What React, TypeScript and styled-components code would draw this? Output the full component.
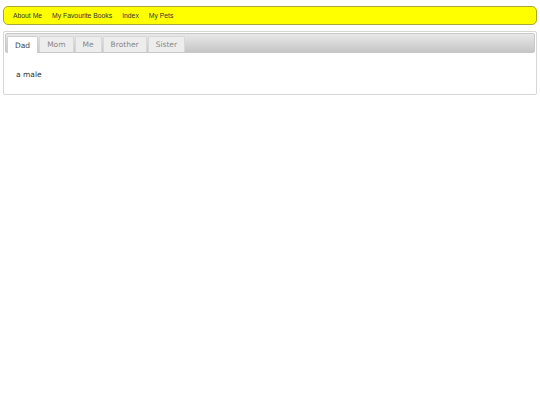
import React, { useState } from 'react';
import styled, { createGlobalStyle } from 'styled-components';

const GlobalStyle = createGlobalStyle`
	html, body {
		margin: 0;
		padding: 0;
		background: #fff;
	}
	body {
		padding: 6px 3px;
	}
`;

const Nav = styled.nav`
	display: flex;
	align-items: center;
	height: 17px;
	padding: 0 9px;
	background: #ffff00;
	border: 1px solid #a8a838;
	border-radius: 5px;
	gap: 10px;
`;

const NavLink = styled.a`
	font-family: "Liberation Sans", Arial, sans-serif;
	font-size: 6.8px;
	color: #333;
	text-decoration: none;
`;

const Panel = styled.div`
	margin-top: 6px;
	border: 1px solid #d6d6d6;
	border-radius: 2px;
	padding: 1px;
	height: 60px;
	box-sizing: content-box;
`;

const TabBar = styled.ul`
	display: flex;
	margin: 0;
	padding: 2px 1px 0;
	list-style: none;
	height: 16px;
	border: 1px solid #c8c8c8;
	border-radius: 2px;
	background: linear-gradient(#e8e8e8, #c6c6c6);
	gap: 1px;
`;

const Tab = styled.li<{ $active?: boolean }>`
	display: flex;
	align-items: center;
	padding: 0 7px;
	height: ${p => (p.$active ? '17px' : '16px')};
	box-sizing: border-box;
	border: 1px solid ${p => (p.$active ? '#d0d0d0' : '#d8d8d8')};
	border-bottom: none;
	border-radius: 2px 2px 0 0;
	background: ${p => (p.$active ? '#fff' : '#ededed')};
	font-family: "DejaVu Sans", Verdana, sans-serif;
	font-size: 7.5px;
	color: ${p => (p.$active ? '#444' : '#888')};
	cursor: pointer;
`;

const Content = styled.div`
	padding: 17px 11px 13px;
	font-family: "DejaVu Sans", Verdana, sans-serif;
	font-size: 7.5px;
	color: #333;
`;

const tabs = [
	{ label: 'Dad', text: 'a male' },
	{ label: 'Mom', text: 'a female' },
	{ label: 'Me', text: 'me' },
	{ label: 'Brother', text: 'a male' },
	{ label: 'Sister', text: 'a female' },
];

export default function App() {
	const [active, setActive] = useState(0);
	return (
		<>
			<GlobalStyle />
			<Nav>
				<NavLink href="#">About Me</NavLink>
				<NavLink href="#">My Favourite Books</NavLink>
				<NavLink href="#">Index</NavLink>
				<NavLink href="#">My Pets</NavLink>
			</Nav>
			<Panel>
				<TabBar>
					{tabs.map((t, i) => (
						<Tab key={t.label} $active={i === active} onClick={() => setActive(i)}>
							{t.label}
						</Tab>
					))}
				</TabBar>
				<Content>{tabs[active].text}</Content>
			</Panel>
		</>
	);
}
